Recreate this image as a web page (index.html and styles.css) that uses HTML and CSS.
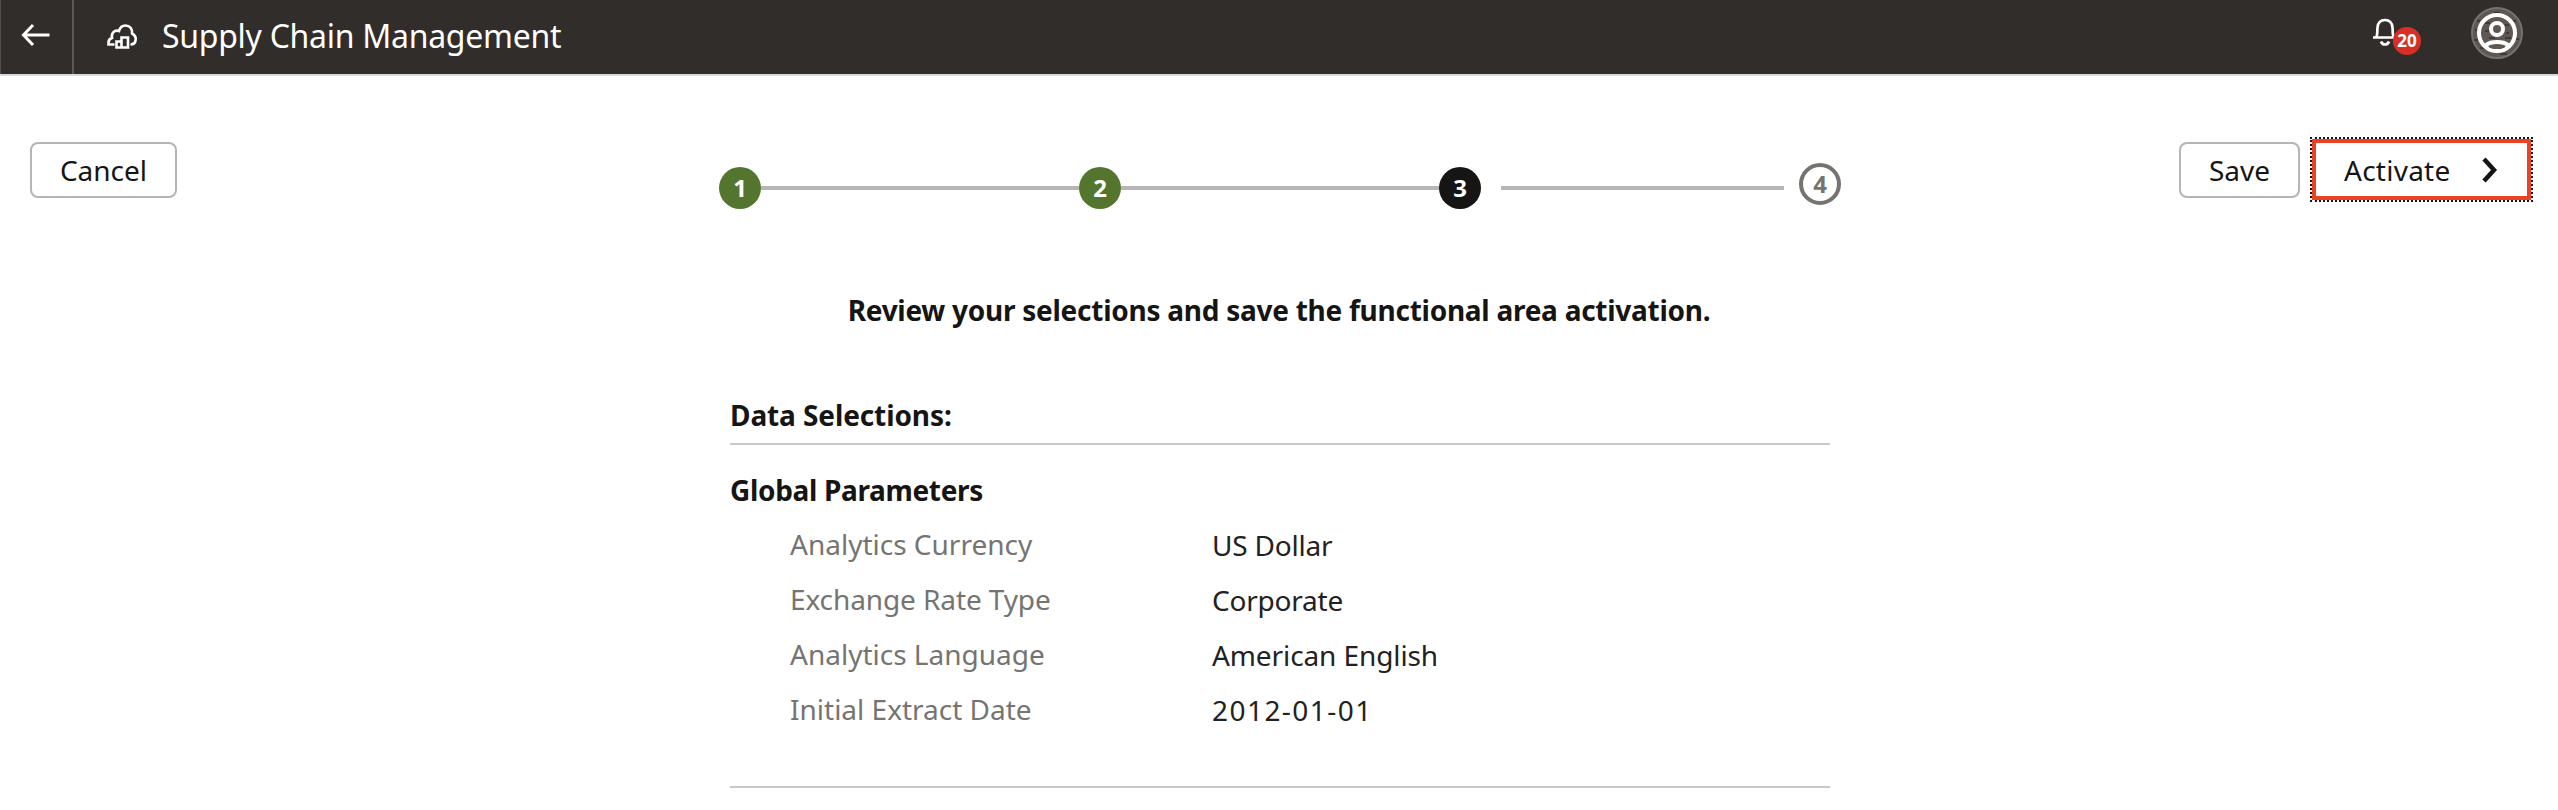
FILE: index.html
```html
<!DOCTYPE html>
<html lang="en">
<head>
<meta charset="utf-8">
<title>Supply Chain Management</title>
<link rel="stylesheet" href="styles.css">
</head>
<body>
<header class="topbar">
  <a class="back" aria-label="Back"><svg width="30" height="24" viewBox="0 0 30 24"><path d="M28.500 12H3M12 2L2.500 12L12 22" fill="none" stroke="#fff" stroke-width="3"/></svg></a>
  <svg class="cloud" width="32" height="28" viewBox="0 0 32 28"><g fill="none" stroke="#fff" stroke-width="2.600"><path d="M8.500 21.500H2.500V19.500C2.500 17 4 15.500 6 15C5 10 8.500 6.500 13 8C14 4.500 16.500 2.500 19.500 2.500C24 2.500 26.500 6 26 10.500C29 12 30 14.500 29.600 17C29.300 20 27.500 21.500 24.500 21.500"/><path d="M10.500 24.500V18.500H15.500V14.500H22V24.500ZM15.500 18.500V24.500"/></g></svg>
  <h1 class="title">Supply Chain Management</h1>
  <div class="notify">
    <svg width="28" height="30" viewBox="0 0 28 30"><path d="M0 20.500H24M3 20.500C5 18 4 14 4.500 10.500C5 5.500 8 3 12 3S19 5.500 19.500 10.500C20 14 19 18 21 20.500" fill="none" stroke="#fff" stroke-width="2.700"/><path d="M8 24.500C9.500 28.500 14.500 28.500 16 24.500" fill="none" stroke="#fff" stroke-width="2.700"/></svg>
    <span class="badge">20</span>
  </div>
  <svg class="avatar" width="52" height="52" viewBox="0 0 52 52"><circle cx="26" cy="26" r="25" fill="#5f5751" stroke="#74716f" stroke-width="2"/><path d="M23 5.500H29M6 14H9M14 16H19M34 18H38M40 14H45M4 23H8M14 24H18M3 33H7M35 26H38M43 32H48M18 31H24M9 41H13M29 47H36M34 31H40" stroke="#38332f" stroke-width="1.300"/><g fill="none" stroke="#fff" stroke-width="4"><circle cx="26" cy="26" r="18"/><circle cx="26" cy="22" r="6"/><path d="M15 38C18 35.500 20 35 26 35S34 35.500 37 38"/></g><ellipse cx="26" cy="40" rx="8" ry="2" fill="#5f5751"/><path d="M16 40.500C21 44.500 31 44.500 36 40.500" fill="none" stroke="#fff" stroke-width="2"/></svg>
</header>
<main class="page">
  <div class="wizard">
    <button class="btn cancel">Cancel</button>
    <div class="train">
      <span class="step done">1</span><span class="line"></span>
      <span class="step done">2</span><span class="line"></span>
      <span class="step current">3</span><span class="line short"></span>
      <span class="step next">4</span>
    </div>
    <div class="actions">
      <button class="btn save">Save</button>
      <button class="btn activate"><span>Activate</span><svg width="16" height="26" viewBox="0 0 16 26"><path d="M2 2L12 13L2 24" fill="none" stroke="#161513" stroke-width="4.500"/></svg></button>
    </div>
  </div>
  <p class="lead">Review your selections and save the functional area activation.</p>
  <section class="review">
    <h2 class="heading selections">Data Selections:</h2>
    <h3 class="heading params">Global Parameters</h3>
    <dl class="list">
      <dt>Analytics Currency</dt><dd class="snug">US Dollar</dd>
      <dt class="trim">Exchange Rate Type</dt><dd class="snug">Corporate</dd>
      <dt>Analytics Language</dt><dd class="trim">American English</dd>
      <dt>Initial Extract Date</dt><dd class="date">2012-01-01</dd>
    </dl>
  </section>
</main>
</body>
</html>
```
FILE: styles.css
```css
* { box-sizing: border-box; }
body { margin: 0; background: #fff; color: #161513; font-family: "Noto Sans", sans-serif; font-size: 28px; overflow: hidden; }
h1, h2, h3, p, dl, dt, dd { margin: 0; }
svg { display: block; flex: none; }
.topbar { display: flex; height: 76px; background: #312d2a; border-bottom: 2px solid #d9d9d9; color: #fff; }
.back { width: 74px; height: 74px; padding: 23px 0 0 20px; border-left: 1px solid #55514e; border-right: 2px solid #5b5856; }
.cloud { margin: 23px 0 0 32px; }
.title { margin-left: 24px; font-size: 32px; font-weight: 400; line-height: 72px; letter-spacing: -0.28px; white-space: nowrap; }
.notify { position: relative; width: 48px; margin: 17px 0 0 auto; }
.badge { position: absolute; left: 20px; top: 10px; width: 28px; height: 28px; border-radius: 50%; background: #d63026; font-size: 17px; font-weight: 700; line-height: 28px; text-align: center; }
.avatar { margin: 7px 35px 0 50px; }
.wizard { display: grid; grid-template-columns: 689px 1122px 1fr; height: 126px; padding: 62px 24px 0 30px; }
.btn { height: 56px; margin: 4px 0 0; border: 2px solid #b5b5b5; border-radius: 8px; padding: 0; background: #fff; color: #161513; font: 400 28px/52px "Noto Sans", sans-serif; }
.cancel { width: 147px; }
.train { display: flex; padding-top: 25px; }
.step { flex: none; width: 42px; height: 42px; margin-top: 4px; border-radius: 50%; color: #fff; font-size: 24px; font-weight: 700; line-height: 42px; text-align: center; }
.done { background: #54752e; }
.current { background: #161513; }
.next { margin-top: 0; border: 4px solid #757471; color: #757471; line-height: 34px; }
.line { width: 318px; height: 4px; margin-top: 23px; background: #b7b6b5; }
.short { width: 283px; margin-left: 20px; margin-right: 15px; }
.actions { display: flex; justify-content: flex-end; }
.save { width: 121px; margin-right: 12px; }
.activate { display: flex; align-items: center; justify-content: space-between; width: 219px; height: 61px; margin: 1px 3px 0 0; padding: 0 29px 0 28px; border: 4px solid #ee4024; border-radius: 0; letter-spacing: 0.25px; outline: 2px dotted #161513; outline-offset: 0; }
.lead { margin-top: 85px; font-weight: 700; line-height: 46px; letter-spacing: -0.26px; text-align: center; }
.review { width: 1100px; height: 393px; margin: 62px 0 0 730px; border-bottom: 2px solid #c9c9c9; }
.heading { font-size: 28px; font-weight: 700; line-height: 41px; white-space: nowrap; }
.selections { height: 50px; border-bottom: 2px solid #c9c9c9; letter-spacing: -0.1px; }
.params { margin-top: 25px; letter-spacing: -0.33px; }
.list { display: grid; grid-template-columns: 422px auto; grid-auto-rows: 55px; padding: 6px 0 0 60px; line-height: 55px; }
.list dt { color: #757471; }
.list dd { padding-top: 1px; color: #222; }
.list .trim { letter-spacing: -0.1px; }
.list .snug { letter-spacing: -0.22px; }
.list .date { letter-spacing: 1.45px; }
```
